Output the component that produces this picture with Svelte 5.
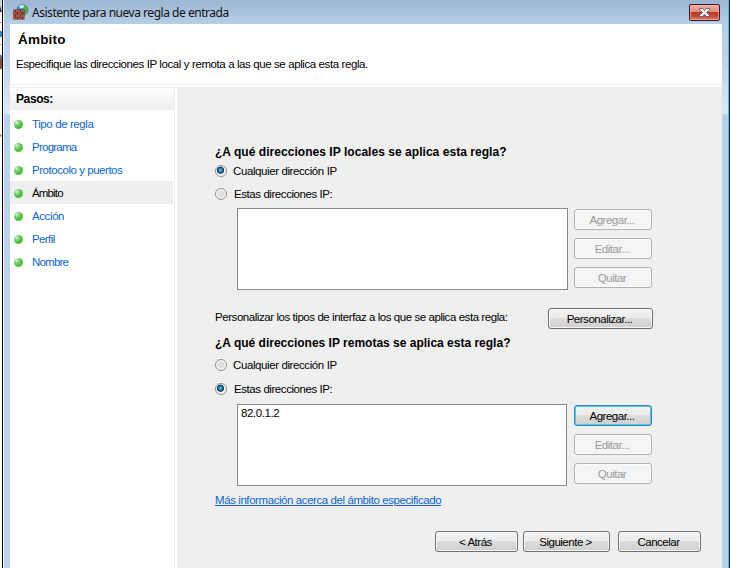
<script>
  const steps = [
    { label: 'Tipo de regla', ls: -0.4 },
    { label: 'Programa', ls: -0.75 },
    { label: 'Protocolo y puertos', ls: -0.46 },
    { label: 'Ámbito', ls: -0.85, current: true },
    { label: 'Acción', ls: -0.4 },
    { label: 'Perfil', ls: -0.6 },
    { label: 'Nombre', ls: -0.8 }
  ];
  const sections = [
    { id: 'local', title: '¿A qué direcciones IP locales se aplica esta regla?', any: true, entries: [], canAdd: false },
    { id: 'remote', title: '¿A qué direcciones IP remotas se aplica esta regla?', any: false, entries: ['82.0.1.2'], canAdd: true }
  ];
</script>

{#snippet section(s)}
  <section class={s.id}>
    <h2>{s.title}</h2>
    <div class="choice first"><i class="radio" class:on={s.any}></i><span class="any">Cualquier dirección IP</span></div>
    <div class="choice second"><i class="radio" class:on={!s.any}></i><span class="these">Estas direcciones IP:</span></div>
    <div class="addresses">
      <div class="list">{#each s.entries as entry}<span>{entry}</span>{/each}</div>
      <div class="actions">
        <button class:focused={s.canAdd} disabled={!s.canAdd}>Agregar...</button>
        <button disabled>Editar...</button>
        <button disabled>Quitar</button>
      </div>
    </div>
  </section>
{/snippet}

<div class="screen">
  <div class="behind">
    <svg width="2" height="568">
      <rect width="2" height="12" fill="#c9d8eb" />
      <path d="M0 6l2 6H0z" fill="#333" />
      <rect y="22" width="2" height="1" fill="#99a" />
      <rect y="31" width="2" height="6" fill="#238bc9" />
      <rect y="44" width="2" height="1" fill="#aab" />
      <rect y="55" width="2" height="14" fill="#8e4c42" />
      <rect y="55" width="2" height="4" fill="#557da5" />
      <path d="M0 134l2 1.500-2 1.500z" fill="#888" />
    </svg>
  </div>
  <div class="window">
    <div class="titlebar">
      <svg class="app" width="17" height="16" viewBox="0 0 17 16">
        <circle cx="10.500" cy="6" r="5.600" fill="#2c7fd0" stroke="#4a7fae" stroke-width=".5" />
        <path d="M12 1l2.500 1.500 1.300 3-1 4-2 1.500V7.500L11 5.500z" fill="#52b53c" />
        <path d="M7 2.200Q9 .6 12 1.200L11.500 4 8 4.500z" fill="#c9f0f2" />
        <rect x="1" y="5.500" width="11.500" height="10" fill="#6b2b22" />
        <path d="M1 6h2v2H1zm3 0h4v2H4zm5 0h3v2H9zM1 8.500h4v2H1zm5 0h4v2H6zm5 0h1.500v2H11zM1 11h2v2H1zm3 0h4v2H4zm5 0h3v2H9zM1 13.500h4v1.500H1zm5 0h4v1.500H6zm5 0h1.500v1.500H11z" fill="#ad5a47" />
      </svg>
      <span>Asistente para nueva regla de entrada</span>
      <div class="close">
        <svg width="11" height="9" viewBox="0 0 11 9">
          <path d="M.5.500h3L5.500 2.600 7.500.500h3v1.200L7.600 4.500l2.900 2.800v1.200h-3l-2-2.100-2 2.100h-3V7.300L3.400 4.500.5 1.700z" fill="#f4f4f6" stroke="#535666" stroke-width=".9" />
        </svg>
      </div>
    </div>
    <div class="client">
      <header>
        <h1>Ámbito</h1>
        <p>Especifique las direcciones IP local y remota a las que se aplica esta regla.</p>
      </header>
      <div class="body">
        <nav>
          <div class="navtitle">Pasos:</div>
          {#each steps as step}
            <div class="step" class:current={step.current}>
              <i class="dot"></i><span style:letter-spacing="{step.ls}px">{step.label}</span>
            </div>
          {/each}
        </nav>
        <main>
          {@render section(sections[0])}
          <div class="customize">
            <span>Personalizar los tipos de interfaz a los que se aplica esta regla:</span>
            <button>Personalizar...</button>
          </div>
          {@render section(sections[1])}
          <div class="more"><a href="#top">Más información acerca del ámbito especificado</a></div>
          <footer>
            <button class="back">&lt; Atrás</button>
            <button class="next">Siguiente &gt;</button>
            <button class="cancel">Cancelar</button>
          </footer>
        </main>
      </div>
    </div>
  </div>
</div>

<style>
  :global(body) { margin: 0; overflow: hidden; }
  * { box-sizing: border-box; }
  .screen {
    display: flex; width: 730px; height: 568px; overflow: hidden;
    font: 11.5px/14px "Liberation Sans", Arial, sans-serif; color: #000; white-space: nowrap;
  }
  .behind { width: 3px; background: #fff; border-right: 1px solid #000; }
  .behind svg { display: block; }
  .window {
    width: 727px; padding: 0 6px; border-left: 1px solid #f2f8fd; border-right: 1px solid #06151c;
    background: linear-gradient(#9bb6d2 0, #b7cee8 24px, #bcd2eb 60px, #dce9f6 113px, #b9d1ea 115px);
    box-shadow: inset -1px 0 #35c8f2;
  }
  .titlebar { display: flex; height: 24px; padding-left: 2px; }
  .app { margin-top: 4px; }
  .titlebar span { font: 12px/18px "Noto Sans", "Open Sans", sans-serif; margin: 4px 0 0 3px; color: #111; letter-spacing: -.47px; }
  .close {
    margin: 4px 3px 0 auto; width: 31px; height: 17px; border: 1px solid #47141c; border-radius: 2px;
    background: linear-gradient(#eeb2a6, #dc8b7d 48%, #bd3c29 50%, #c44a36 75%, #dc8570);
    box-shadow: inset 0 0 0 1px #f0b9ae99; display: flex; justify-content: center; align-items: center;
  }
  .client { width: 712px; height: 544px; background: #fff; }
  header { height: 61px; border-bottom: 1px solid #ededed; padding: 7px 0 0 6px; }
  h1 { margin: 0 0 0 2px; font-size: 13.5px; line-height: 18px; letter-spacing: .2px; }
  header p { margin: 8px 0 0; letter-spacing: -.4px; }
  .body { display: flex; padding-top: 2px; height: 483px; }
  nav { width: 165px; border-right: 1px solid #ededed; margin-right: 2px; }
  .navtitle { height: 23px; padding: 4px 0 0 6px; font-size: 12px; font-weight: bold; background: linear-gradient(#fdfdfd, #efefef); border-top: 1px solid #eee; letter-spacing: -.4px; }
  .navtitle + .step { margin-top: 2px; }
  .step { height: 23px; margin-right: 1px; padding-left: 4px; display: flex; align-items: center; color: #0b66cc; }
  .step.current { background: #efefef; color: #000; }
  .step span { margin-left: 9px; }
  .dot { width: 9px; height: 9px; margin-top: 1px; border-radius: 50%; background: radial-gradient(circle at 30% 28%, #dcf3da 0, #7fd078 28%, #45bd35 58%, #53c62a 75%, #8ad66c); }
  main { flex: 1; background: #efefef; padding: 57px 0 0 38px; }
  section { height: 146px; }
  .remote { height: 151px; }
  h2 { margin: 0; height: 18px; font-size: 12px; line-height: 16px; letter-spacing: .04px; }
  .remote h2 { height: 21px; letter-spacing: 0; }
  .choice { display: flex; align-items: center; height: 18px; }
  .second { margin-top: 5px; }
  .remote .second { margin-top: 6px; }
  .radio { width: 12px; height: 12px; border: 1px solid #8e8f8f; border-radius: 50%; background: radial-gradient(circle, #dedede 0, #e0e0e0 3px, #f8f8f8 4.500px); }
  .radio.on { background: radial-gradient(circle at 45% 42%, #7dd3ee 0, #268ebf 1.500px, #0b3556 3.200px, #f4f4f4 4px); }
  .choice span { margin-left: 6px; letter-spacing: -.4px; }
  .choice .these { margin-left: 7px; letter-spacing: -.43px; }
  .addresses { display: flex; margin: 5px 0 0 22px; }
  .remote .addresses { margin-top: 6px; }
  .list { width: 331px; height: 82px; border: 1px solid #828790; background: #fff; padding: 1px 3px; margin-right: 6px; }
  .remote .list { width: 330px; margin-right: 7px; }
  .list span { letter-spacing: -.4px; display: block; }
  .actions { display: flex; flex-direction: column; gap: 8px; padding-top: 1px; }
  button {
    display: block; width: 78px; height: 21px; padding: 1px 2px 0 0; font: inherit; line-height: 14px; color: #000; letter-spacing: -.48px;
    border: 1px solid #707070; border-radius: 3px; background: linear-gradient(#f2f2f2, #ebebeb 48%, #dddddd 50%, #cfcfcf);
    box-shadow: inset 0 0 0 1px #fcfcfcdd; flex: none;
  }
  button:disabled { color: #9b9b9b; border-color: #adb2b5; background: #f4f4f4; }
  button.focused { border-color: #3c7fb1; box-shadow: inset 0 0 0 1px #48d0f3; }
  .customize { display: flex; height: 45px; padding-top: 18px; }
  .customize span { width: 333px; letter-spacing: -.44px; padding-top: 2px; }
  .customize button { width: 105px; }
  .more { height: 14px; margin-top: 7px; }
  .more a { color: #0b66cc; letter-spacing: -.42px; text-decoration: underline; text-underline-offset: 1px; }
  footer { display: flex; padding-left: 220px; margin-top: 24px; }
  .back { width: 83px; margin-right: 5px; }
  .next { width: 87px; margin-right: 8px; }
  .cancel { width: 83px; }
</style>
